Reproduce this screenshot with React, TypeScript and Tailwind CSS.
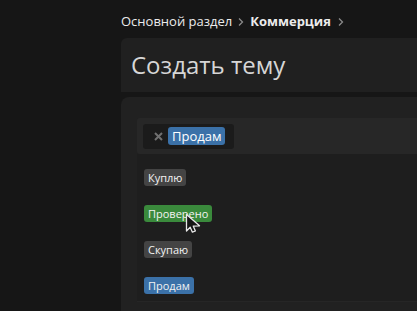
import React from 'react';

const font = { fontFamily: '"Open Sans", "Noto Sans", sans-serif' };

function Chevron() {
  return (
    <svg className="w-[8px] h-[10px] text-[#8a8a8a]" viewBox="0 0 8 10" fill="none" stroke="currentColor" strokeWidth="1.3">
      <path d="M2 1.5 L5.5 5 L2 8.5" />
    </svg>
  );
}

function Cursor() {
  return (
    <svg className="absolute left-[-1px] top-[8px] w-[17px] h-[21px]" viewBox="0 0 17 21">
      <path d="M1.5 1.5 L1.5 18 L5.2 14.2 L7.4 19.2 L10.4 18 L8.3 13.2 L14.5 12.8 Z" fill="#151515" stroke="#e8e8e8" strokeWidth="1.3" strokeLinejoin="round" />
    </svg>
  );
}

const options = [
  { label: 'Куплю', cls: 'bg-[#444444]' },
  { label: 'Проверено', cls: 'bg-[#3a8a3c]', cursor: true },
  { label: 'Скупаю', cls: 'bg-[#444444]' },
  { label: 'Продам', cls: 'bg-[#3b71a8]' },
];

export default function App() {
  return (
    <div className="h-[311px] overflow-hidden bg-[#161616] pl-[121px] pt-[12px]" style={font}>
      {/* Breadcrumb */}
      <div className="flex items-center h-[20px] text-[13px] text-[#ececec]">
        <span>Основной раздел</span>
        <span className="mx-[5px]"><Chevron /></span>
        <span className="font-bold">Коммерция</span>
        <span className="mx-[6px]"><Chevron /></span>
      </div>

      {/* Header */}
      <div className="mt-[6px] h-[54px] bg-[#202020] rounded-tl-md flex items-center px-[10px]">
        <h1 className="text-[24px] text-[#d6d6d6] leading-none pb-[1px]">Создать тему</h1>
      </div>

      {/* Body */}
      <div className="mt-[5px] h-[300px] bg-[#212121] rounded-tl-lg pt-[21px] pl-[16px]">
        <div className="h-[36px] bg-[#272727] rounded-l-[3px] flex items-center pl-[6px]">
          <div className="h-[25px] bg-[#1b1b1b] rounded-[3px] flex items-center pl-[11px] pr-[9px] gap-[5px]">
            <svg className="w-[9px] h-[9px] text-[#707070]" viewBox="0 0 9 9" fill="none" stroke="currentColor" strokeWidth="2">
              <path d="M1 1 L8 8 M8 1 L1 8" />
            </svg>
            <span className="bg-[#3b71a8] text-white text-[13px] leading-none rounded-[3px] px-[4px] h-[18px] flex items-center">Продам</span>
          </div>
        </div>
        <div className="h-[148px] bg-[#1e1e1e] border-b border-[#262626] pl-[7px] pt-[15px] flex flex-col gap-[19px]">
          {options.map((o) => (
            <div key={o.label} className="relative h-[17px] flex">
              <span className={`${o.cls} text-[#f2f2f2] text-[11px] leading-none rounded-[3px] px-[4px] h-[17px] flex items-center`}>{o.label}</span>
              {o.cursor && (
                <span className="relative left-[-26px]"><Cursor /></span>
              )}
            </div>
          ))}
        </div>
      </div>
    </div>
  );
}
